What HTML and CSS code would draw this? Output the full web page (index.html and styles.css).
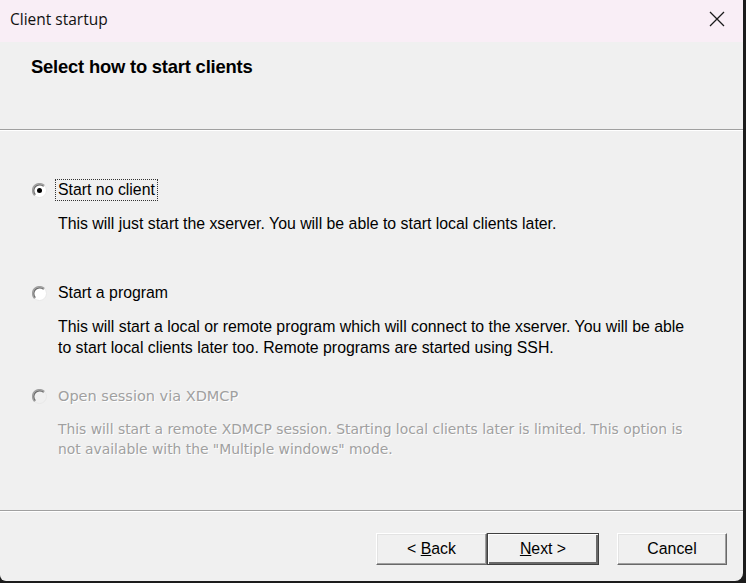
FILE: index.html
```html
<!DOCTYPE html>
<html>
<head>
    <title>Client startup</title>
    <link rel="stylesheet" href="styles.css">
</head>
<body>
    <div class="window">
        <div class="titlebar">
            <span class="title">Client startup</span>
            <svg class="close" width="16" height="16" viewBox="0 0 16 16">
                <path d="M1 1 L15 15 M15 1 L1 15" stroke="#1a1a1a" stroke-width="1.3" fill="none"/>
            </svg>
        </div>
        <div class="header">
            <div class="header-title">Select how to start clients</div>
        </div>
        <div class="separator"></div>

        <div class="content">
            <div class="choice">
                <div class="radio-row">
                    <svg class="radio" width="15" height="15" viewBox="0 0 15 15">
                        <circle cx="7.5" cy="7.5" r="7" fill="#fff" stroke="#e8e8e8" stroke-width="1"/>
                        <path d="M2.6 12.4 A6.9 6.9 0 0 1 12.4 2.6" stroke="#a0a0a0" stroke-width="1.4" fill="none"/>
                        <path d="M3.4 11.6 A5.8 5.8 0 0 1 11.6 3.4" stroke="#696969" stroke-width="1.2" fill="none"/>
                        <circle cx="7.5" cy="7.5" r="2.5" fill="#000"/>
                    </svg>
                    <span class="label focused">Start no client</span>
                </div>
                <p class="desc">This will just start the xserver. You will be able to start local clients later.</p>
            </div>

            <div class="choice">
                <div class="radio-row">
                    <svg class="radio" width="15" height="15" viewBox="0 0 15 15">
                        <circle cx="7.5" cy="7.5" r="7" fill="#fff" stroke="#e8e8e8" stroke-width="1"/>
                        <path d="M2.6 12.4 A6.9 6.9 0 0 1 12.4 2.6" stroke="#a0a0a0" stroke-width="1.4" fill="none"/>
                        <path d="M3.4 11.6 A5.8 5.8 0 0 1 11.6 3.4" stroke="#696969" stroke-width="1.2" fill="none"/>
                    </svg>
                    <span class="label">Start a program</span>
                </div>
                <p class="desc">This will start a local or remote program which will connect to the xserver. You will be able<br>to start local clients later too. Remote programs are started using SSH.</p>
            </div>

            <div class="choice disabled">
                <div class="radio-row">
                    <svg class="radio" width="15" height="15" viewBox="0 0 15 15">
                        <circle cx="7.5" cy="7.5" r="7" fill="#f0f0f0" stroke="#e8e8e8" stroke-width="1"/>
                        <path d="M2.6 12.4 A6.9 6.9 0 0 1 12.4 2.6" stroke="#a0a0a0" stroke-width="1.4" fill="none"/>
                        <path d="M3.4 11.6 A5.8 5.8 0 0 1 11.6 3.4" stroke="#696969" stroke-width="1.2" fill="none"/>
                    </svg>
                    <span class="label">Open session via XDMCP</span>
                </div>
                <p class="desc">This will start a remote XDMCP session. Starting local clients later is limited. This option is<br>not available with the "Multiple windows" mode.</p>
            </div>
        </div>

        <div class="separator"></div>
        <div class="footer">
            <button class="btn"><span>&lt; <u>B</u>ack</span></button>
            <button class="btn default"><span><u>N</u>ext &gt;</span></button>
            <button class="btn cancel">Cancel</button>
        </div>
    </div>
</body>
</html>
```

FILE: styles.css
```css
body {
    margin: 0;
    background: #1c1c1c;
    font-family: "Liberation Sans", Arial, sans-serif;
    font-size: 15.85px;
    color: #000;
}

.window {
    width: 743px;
    height: 581px;
    background: #f0f0f0;
    display: flex;
    flex-direction: column;
    border-radius: 0 0 8px 6px;
    overflow: hidden;
}

.titlebar {
    height: 42px;
    background: #f9eef6;
    display: flex;
    align-items: center;
    justify-content: space-between;
    padding: 0 18px 0 10px;
}

.title {
    font-family: "Open Sans", "Noto Sans", sans-serif;
    font-size: 15.5px;
    color: #111;
    margin-top: -4px;
}

.close {
    margin-top: -4px;
}

.header {
    height: 87px;
    box-sizing: border-box;
    padding: 14px 0 0 31px;
}

.header-title {
    font-weight: bold;
    font-size: 18.4px;
    letter-spacing: -0.2px;
}

.separator {
    height: 1px;
    background: #a0a0a0;
    border-bottom: 1px solid #fff;
}

.content {
    flex: 1;
    padding: 48px 0 0 32px;
}

.choice {
    margin-bottom: 48px;
}

.choice + .choice.disabled {
    margin-top: -21px;
}

.radio-row {
    display: flex;
    align-items: center;
    height: 22px;
}

.radio {
    margin-right: 11px;
    margin-top: 1px;
}

.label {
    padding: 1px 2px;
    border: 1px dotted transparent;
    margin-left: -3px;
}

.label.focused {
    border-color: #333;
}

.desc {
    margin: 12px 0 0 26px;
    line-height: 21px;
}

.disabled .label,
.disabled .desc {
    color: #a0a0a0;
    text-shadow: 1px 1px 0 #fff;
    font-family: "DejaVu Sans", sans-serif;
    font-size: 14.5px;
}

.disabled .desc {
    font-size: 13.85px;
    line-height: 20px;
}

.footer {
    height: 69px;
    display: flex;
    align-items: flex-start;
    padding: 21px 0 0 376px;
    box-sizing: border-box;
}

.btn {
    width: 111px;
    height: 32px;
    background: #f0f0f0;
    font-family: "Liberation Sans", Arial, sans-serif;
    font-size: 15.85px;
    color: #000;
    border: 1px solid;
    border-color: #fff #696969 #696969 #fff;
    box-shadow: inset -1px -1px 0 #a0a0a0, inset 1px 1px 0 #e3e3e3;
    padding: 0;
}

.btn.default {
    width: 112px;
    border: 1px solid #404040;
    box-shadow: inset 1px 1px 0 #fff, inset -2px -2px 0 #696969, inset -1px -1px 0 #a0a0a0;
}

.btn.cancel {
    width: 110px;
    margin-left: 18px;
}
```
